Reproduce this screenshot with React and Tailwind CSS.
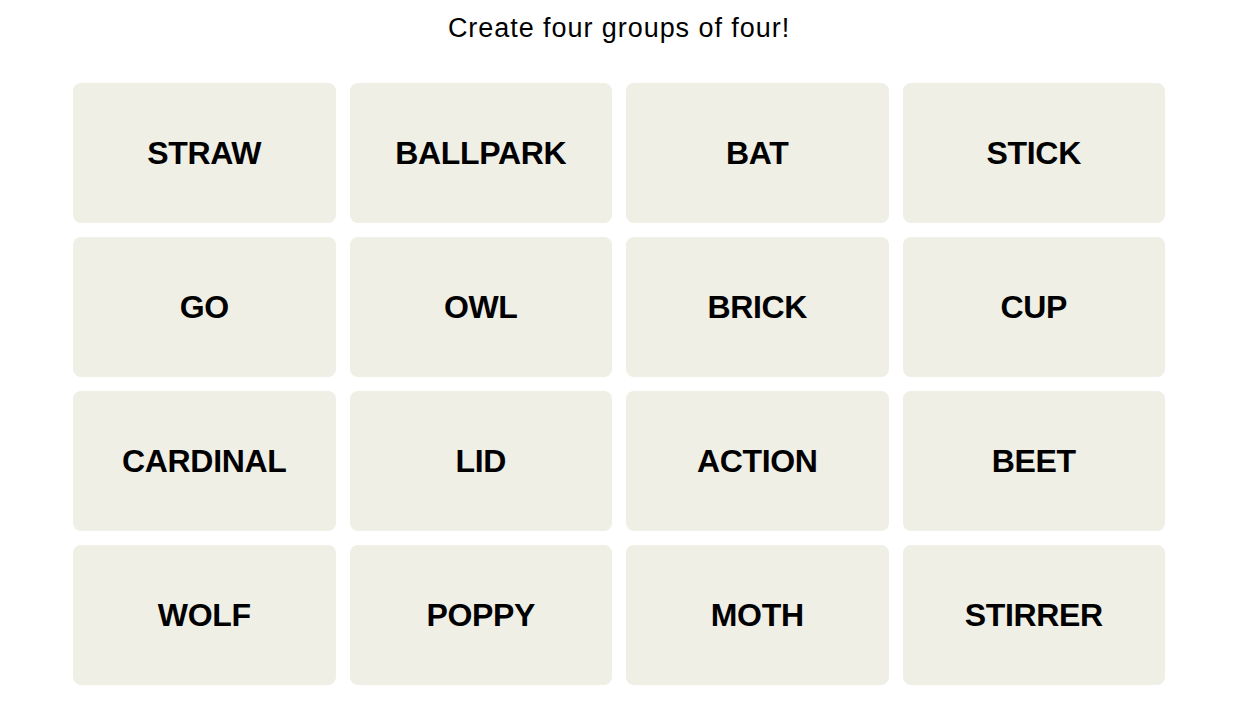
const WORDS = [
  'STRAW', 'BALLPARK', 'BAT', 'STICK',
  'GO', 'OWL', 'BRICK', 'CUP',
  'CARDINAL', 'LID', 'ACTION', 'BEET',
  'WOLF', 'POPPY', 'MOTH', 'STIRRER',
];

const Tile = ({ word }) => (
  <button className="h-[140px] rounded-lg bg-[#efefe6] flex items-center justify-center text-[32px] font-bold text-black tracking-[-0.01em]">
    {word}
  </button>
);

export default function App() {
  return (
    <div className="min-h-screen bg-white font-['Liberation_Sans',Arial,sans-serif]">
      <div className="w-[1092px] ml-[73px] pt-[11px]">
        <h1 className="text-center text-[27px] leading-[34px] tracking-[0.035em] text-black">Create four groups of four!</h1>
        <div className="mt-[38px] grid grid-cols-4 gap-[14px]">
          {WORDS.map((w) => (
            <Tile key={w} word={w} />
          ))}
        </div>
      </div>
    </div>
  );
}
